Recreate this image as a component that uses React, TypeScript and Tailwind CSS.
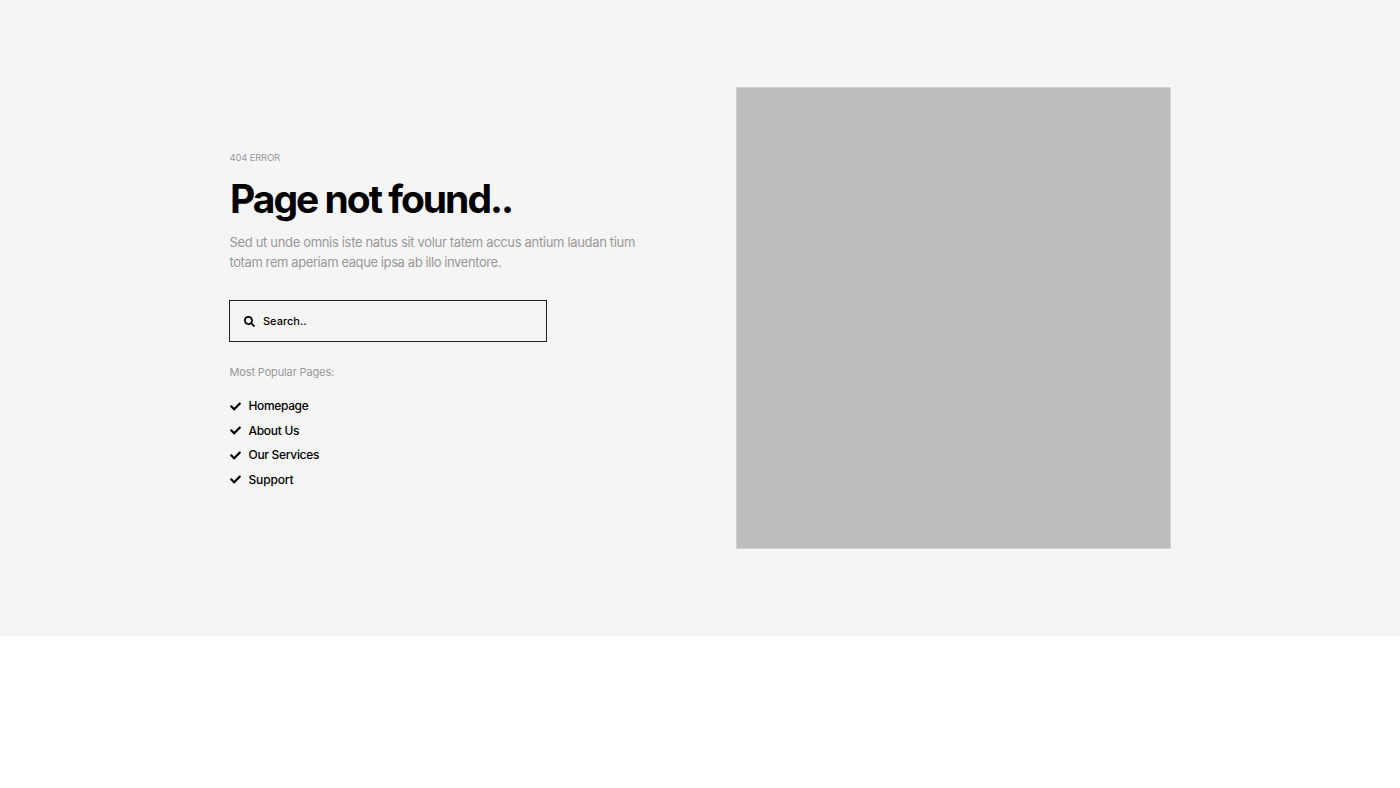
import { FaCheck, FaSearch } from "react-icons/fa";

const PAGES = [
  { name: "Homepage", tracking: "tracking-[-0.36px]" },
  { name: "About Us", tracking: "tracking-[-0.3px]" },
  { name: "Our Services", tracking: "tracking-[-0.3px]" },
  { name: "Support", tracking: "tracking-[-0.15px]" },
];

export default function App() {
  return (
    <div className="min-h-screen bg-white font-['Inter',sans-serif]">
      <section className="h-[636px] bg-[#f5f5f5] pt-[87px]">
        <div className="mx-auto flex w-[942px] justify-between">
          <div className="w-[420px] pt-[63px]">
            <p className="pl-[0.5px] text-[9.5px] leading-4 tracking-[-0.2px] text-[#999]">
              404 ERROR
            </p>
            <h1 className="mt-[9px] pl-px text-[39px] leading-[48px] font-bold tracking-[-2px] whitespace-nowrap text-black">
              Page not found..
            </h1>
            <p className="mt-[9px] pl-[0.5px] text-[13px] leading-5 tracking-[-0.33px] whitespace-nowrap text-[#999]">
              Sed ut unde omnis iste natus sit volur tatem accus antium laudan tium
              <br />
              <span className="tracking-[-0.41px]">
                totam rem aperiam eaque ipsa ab illo inventore.
              </span>
            </p>

            <form className="mt-[28px] flex h-[42px] w-[318px] items-center border border-[#222] px-[14px]">
              <FaSearch className="mr-[8px] size-[11px] shrink-0 text-black" />
              <input
                type="text"
                placeholder="Search.."
                className="w-full bg-transparent text-[11px] font-medium text-black outline-none placeholder:text-black"
              />
            </form>

            <p className="mt-[22px] pl-[0.5px] text-[11px] leading-4 tracking-[-0.14px] text-[#999]">
              Most Popular Pages:
            </p>
            <ul className="mt-[14px] pl-[0.5px]">
              {PAGES.map((p) => (
                <li key={p.name} className="flex h-[24.5px] items-center">
                  <FaCheck className="mr-[8px] size-[11px] shrink-0 text-black" />
                  <a
                    href="#"
                    className={`text-[12px] leading-5 font-medium text-black ${p.tracking}`}
                  >
                    {p.name}
                  </a>
                </li>
              ))}
            </ul>
          </div>

          <div className="h-[462px] w-[435px] border border-[#d0d1d2] bg-[#bcbdbf]" />
        </div>
      </section>
    </div>
  );
}
